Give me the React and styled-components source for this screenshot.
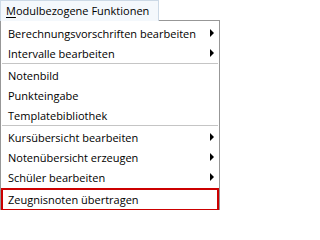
import React from 'react'
import styled, { createGlobalStyle } from 'styled-components'

const GlobalStyle = createGlobalStyle`
  body {
    margin: 0;
    background: #ffffff;
    font-family: "Open Sans", "Noto Sans", sans-serif;
    font-size: 11px;
    color: #000000;
  }
`

const items = [
  { label: 'Berechnungsvorschriften bearbeiten', sub: true },
  { label: 'Intervalle bearbeiten', sub: true },
  { sep: true },
  { label: 'Notenbild' },
  { label: 'Punkteingabe' },
  { label: 'Templatebibliothek' },
  { sep: true },
  { label: 'Kursübersicht bearbeiten', sub: true },
  { label: 'Notenübersicht erzeugen', sub: true },
  { label: 'Schüler bearbeiten', sub: true },
  { label: 'Zeugnisnoten übertragen', marked: true },
]

const MenuItem = ({ label, sub, marked }) => (
  <Item $marked={marked}>
    <ItemText>{label}</ItemText>
    {sub && <Arrow />}
  </Item>
)

const App = () => {
  return (
    <Wrapper>
      <GlobalStyle />
      <MenuBar>
        <TopTab>
          <u>M</u>odulbezogene Funktionen
        </TopTab>
      </MenuBar>
      <Dropdown>
        {items.map((item, index) =>
          item.sep
            ? <Separator key={index} />
            : <MenuItem key={index} {...item} />
        )}
      </Dropdown>
    </Wrapper>
  )
}

const Wrapper = styled.div`
  width: 222px;
  height: 210px;
  overflow: hidden;
`

const MenuBar = styled.div`
  display: flex;
  height: 20px;
`

const TopTab = styled.div`
  box-sizing: border-box;
  width: 159px;
  height: 21px;
  padding: 1px 0 0 5px;
  border: 1px solid #ccd9e6;
  border-bottom: none;
  background: #f4f8fc;
  line-height: 18px;
  white-space: nowrap;
  position: relative;
  z-index: 1;

  u {
    text-underline-offset: 2px;
  }
`

const Dropdown = styled.div`
  box-sizing: border-box;
  width: 220px;
  border: 1px solid #979797;
  background: #ffffff;
  padding: 2px 0 0 0;
`

const Item = styled.div`
  box-sizing: border-box;
  display: flex;
  align-items: center;
  justify-content: space-between;
  height: ${p => (p.$marked ? '23px' : '20px')};
  padding: 0 5px 0 ${p => (p.$marked ? '5px' : '7px')};
  border: ${p => (p.$marked ? '2px solid #cc0000' : 'none')};
  margin: ${p => (p.$marked ? '1px 0 0 0' : '0')};
`

const ItemText = styled.span`
  white-space: nowrap;
`

const Arrow = styled.span`
  width: 0;
  height: 0;
  border-top: 4px solid transparent;
  border-bottom: 4px solid transparent;
  border-left: 4px solid #000000;
`

const Separator = styled.div`
  height: 1px;
  margin: 0 1px 1px 1px;
  background: #c5c5c5;
`

export default App
